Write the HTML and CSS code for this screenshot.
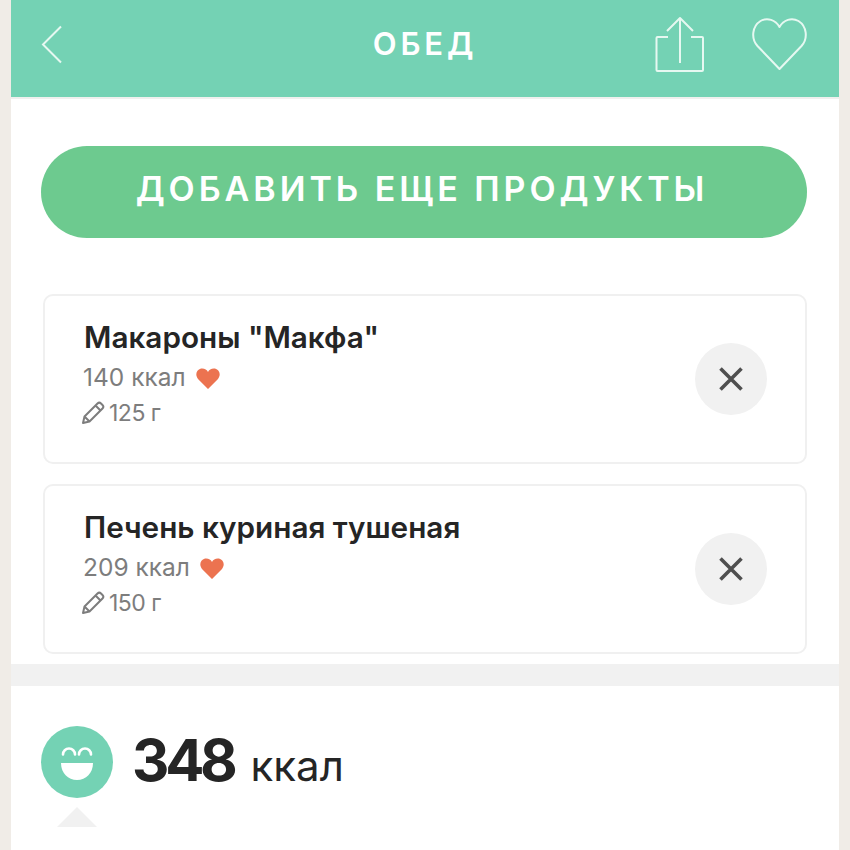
FILE: index.html
```html
<!DOCTYPE html>
<html lang="ru">
<head>
<meta charset="utf-8">
<title>Обед</title>
<link rel="stylesheet" href="styles.css">
</head>
<body>
<div class="phone">
  <header class="topbar">
    <svg class="icon-back" width="24" height="40" viewBox="0 0 24 40"><path d="M21 2.500 3 20.500 21 38.500" fill="none" stroke="#e6f8f1" stroke-width="2"/></svg>
    <h1 class="title">ОБЕД</h1>
    <svg class="icon-share" width="50" height="56" viewBox="0 0 50 56"><path d="M13 21H2.500a1 1 0 0 0-1 1V54a1 1 0 0 0 1 1H47a1 1 0 0 0 1-1V22a1 1 0 0 0-1-1H36M25 2V47M12 15 25 2 38 15" fill="none" stroke="#e6f8f1" stroke-width="2" stroke-linejoin="round"/></svg>
    <svg class="icon-heart" width="56" height="54" viewBox="0 0 56 54"><path d="M28 52 6 29C-1 21 1 9 9 4c7-4 15-1 19 6 4-7 12-10 19-6 8 5 10 17 3 25Z" fill="none" stroke="#e6f8f1" stroke-width="2" stroke-linejoin="round"/></svg>
  </header>
  <div class="add-wrap"><button class="add-btn">ДОБАВИТЬ ЕЩЕ ПРОДУКТЫ</button></div>
  <section class="list">
    <article class="card">
      <div class="card-text">
        <div class="name">Макароны "Макфа"</div>
        <div class="kcal">140 ккал <svg class="mini-heart" width="24" height="21" viewBox="0 0 24 21"><path d="M12 21 2 11C-1 7 0 2 5 .500 8 0 11 1.500 12 4c1-2.500 4-4 7-3.500C24 2 25 7 22 11Z" fill="#ec7350"/></svg></div>
        <div class="weight"><svg class="pencil" width="24" height="24" viewBox="0 0 24 24"><path d="M2 22l1.500-6.500L16.500 2.500a2.500 2.500 0 0 1 3.500 0l1.500 1.500a2.500 2.500 0 0 1 0 3.500L8.500 20.500ZM3.500 15.500l5 5M14.500 4.500l5 5" fill="none" stroke="#7d7d7d" stroke-width="2" stroke-linejoin="round"/></svg>125 г</div>
      </div>
      <button class="remove" aria-label="Удалить"><svg width="26" height="26" viewBox="0 0 26 26"><path d="M2.500 2.500 23.500 23.500M23.500 2.500 2.500 23.500" stroke="#4f4f4f" stroke-width="3.600"/></svg></button>
    </article>
    <article class="card">
      <div class="card-text">
        <div class="name">Печень куриная тушеная</div>
        <div class="kcal">209 ккал <svg class="mini-heart" width="24" height="21" viewBox="0 0 24 21"><path d="M12 21 2 11C-1 7 0 2 5 .500 8 0 11 1.500 12 4c1-2.500 4-4 7-3.500C24 2 25 7 22 11Z" fill="#ec7350"/></svg></div>
        <div class="weight"><svg class="pencil" width="24" height="24" viewBox="0 0 24 24"><path d="M2 22l1.500-6.500L16.500 2.500a2.500 2.500 0 0 1 3.500 0l1.500 1.500a2.500 2.500 0 0 1 0 3.500L8.500 20.500ZM3.500 15.500l5 5M14.500 4.500l5 5" fill="none" stroke="#7d7d7d" stroke-width="2" stroke-linejoin="round"/></svg>150 г</div>
      </div>
      <button class="remove" aria-label="Удалить"><svg width="26" height="26" viewBox="0 0 26 26"><path d="M2.500 2.500 23.500 23.500M23.500 2.500 2.500 23.500" stroke="#4f4f4f" stroke-width="3.600"/></svg></button>
    </article>
  </section>
  <div class="divider"></div>
  <section class="summary">
    <div class="smile-col">
      <svg class="smile" width="72" height="72" viewBox="0 0 72 72"><circle cx="36" cy="36" r="36" fill="#74d2b4"/><path d="M22 28.500a6 6 0 0 1 12 0M38 28.500a6 6 0 0 1 12 0" fill="none" stroke="#fff" stroke-width="2.600" stroke-linecap="round"/><path d="M20 37H52C52 47 45 54 36 54S20 47 20 37Z" fill="#fff"/></svg>
      <div class="pointer"></div>
    </div>
    <div class="total"><span class="total-num">348</span><span class="total-unit">ккал</span></div>
  </section>
</div>
</body>
</html>
```
FILE: styles.css
```css
* { box-sizing: border-box; }
html, body { margin: 0; padding: 0; }
body {
  width: 850px;
  height: 850px;
  overflow: hidden;
  background: #f0ece7;
  font-family: "Inter", "Noto Sans", sans-serif;
}
.phone {
  width: 828px;
  height: 850px;
  margin-left: 11px;
  background: #fff;
  overflow: hidden;
}
.topbar {
  height: 99px;
  background: #74d2b4;
  border-bottom: 2px solid #f0f0ee;
  display: flex;
  align-items: flex-start;
  position: relative;
}
.icon-back { margin: 24px 0 0 29px; flex: none; }
.title {
  position: absolute;
  left: 0;
  right: 0;
  top: 25px;
  margin: 0;
  text-align: center;
  color: #fff;
  font-size: 31px;
  line-height: 38px;
  font-weight: 600;
  letter-spacing: 3.900px;
}
.icon-share { margin: 16px 0 0 591px; flex: none; }
.icon-heart { margin: 17px 0 0 46px; flex: none; width: 57px; }
.add-wrap { padding: 47px 32px 0 30px; }
.add-btn {
  display: block;
  width: 100%;
  height: 92px;
  border: 0;
  border-radius: 46px;
  background: #6dca8f;
  color: #fff;
  font-family: inherit;
  font-size: 34px;
  line-height: 86px;
  font-weight: 600;
  letter-spacing: 3.950px;
  padding: 0 4px 6px 0;
}
.list {
  padding: 56px 32px 0;
  display: flex;
  flex-direction: column;
  gap: 20px;
}
.card {
  height: 170px;
  border: 2px solid #f0f0f0;
  border-radius: 10px;
  display: flex;
  align-items: center;
  justify-content: space-between;
  padding: 0 38px 8px 39px;
}
.card-text { display: flex; flex-direction: column; }
.name {
  font-size: 29.700px;
  line-height: 38px;
  font-weight: 600;
  color: #252525;
  margin-top: -1px;
  margin-bottom: 4px;
}
.kcal {
  font-size: 24.500px;
  line-height: 34px;
  color: #7d7d7d;
  display: flex;
  align-items: center;
  gap: 5px;
  margin-left: -1px;
}
.mini-heart { margin-left: 5px; margin-top: 2px; }
.weight {
  font-size: 23px;
  line-height: 36px;
  letter-spacing: -0.500px;
  color: #7d7d7d;
  display: flex;
  align-items: center;
  margin-left: -3px;
  margin-top: 1px;
  gap: 4px;
}
.remove {
  width: 72px;
  height: 72px;
  flex: none;
  border: 0;
  border-radius: 50%;
  background: #f1f1f1;
  padding: 0;
  margin-bottom: -8px;
  display: flex;
  align-items: center;
  justify-content: center;
}
.divider { height: 22px; margin-top: 10px; background: #f1f1f1; }
.summary { display: flex; padding: 40px 30px 0; gap: 19px; }
.smile-col { display: flex; flex-direction: column; align-items: center; }
.pointer {
  margin-top: 9px;
  width: 0;
  height: 0;
  border-left: 20px solid transparent;
  border-right: 20px solid transparent;
  border-bottom: 20px solid #f1f1f1;
}
.total { color: #252525; line-height: 68px; white-space: nowrap; }
.total-num { font-size: 58px; font-weight: 700; letter-spacing: -4.300px; }
.total-unit { font-size: 42px; font-weight: 400; margin-left: 17px; }
```
